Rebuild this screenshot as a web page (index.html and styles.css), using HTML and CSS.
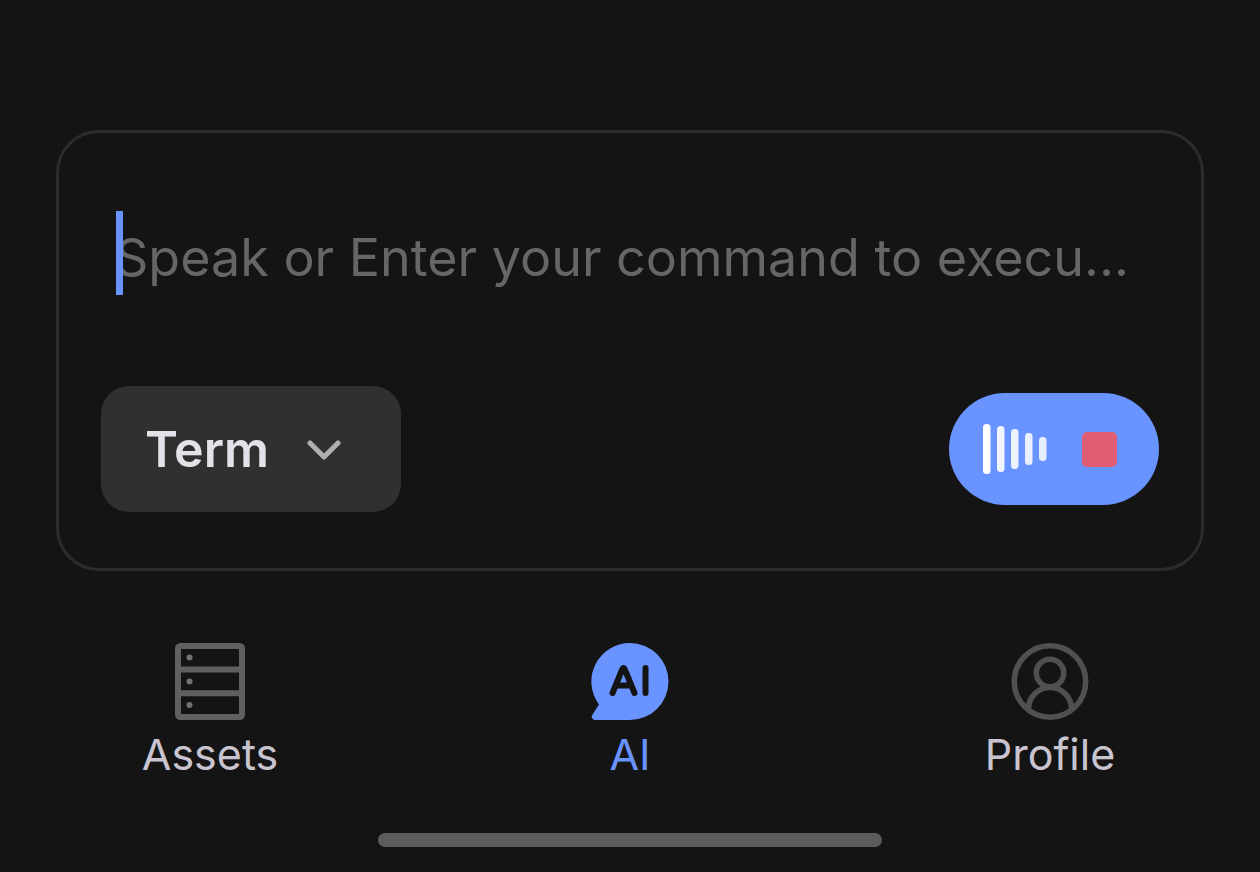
FILE: index.html
```html
<!DOCTYPE html>
<html lang="en">
<head>
<meta charset="utf-8">
<meta name="viewport" content="width=device-width, initial-scale=1">
<title>AI</title>
<link rel="stylesheet" href="styles.css">
</head>
<body>
<main class="screen">
  <form class="composer">
    <div class="prompt">
      <input class="prompt-input" type="text" aria-label="Command" placeholder="Speak or Enter your command to execu...">
      <span class="caret"></span>
    </div>
    <div class="actions">
      <div class="mode">
        <select class="mode-select" aria-label="Mode">
          <option>Term</option>
        </select>
        <svg class="mode-chevron" viewBox="0 0 34 22" aria-hidden="true"><path d="M3 4L17 18L31 4"/></svg>
      </div>
      <button class="voice" type="button" aria-label="Stop recording">
        <svg class="wave" viewBox="0 0 64 50" aria-hidden="true">
          <rect x="0" y="0" width="7.500" height="50" rx="3.500"/>
          <rect x="14" y="2" width="7.500" height="46" rx="3.500" opacity=".9"/>
          <rect x="28" y="5" width="7.500" height="40" rx="3.500" opacity=".88"/>
          <rect x="42" y="9" width="7.500" height="32" rx="3.500" opacity=".86"/>
          <rect x="56" y="13" width="7.500" height="24" rx="3.500" opacity=".84"/>
        </svg>
        <span class="stop"></span>
      </button>
    </div>
  </form>

  <nav class="tabs">
    <a class="tab" href="#assets">
      <svg class="tab-icon" viewBox="0 0 78 78" aria-hidden="true">
        <g fill="none" stroke="#606060" stroke-width="6">
          <rect x="7" y="3" width="64" height="71" rx="2.500"/>
          <path d="M7 26.500H71M7 50.200H71"/>
        </g>
        <g fill="#707070"><circle cx="18.500" cy="14.500" r="3"/><circle cx="18.500" cy="38.500" r="3"/><circle cx="18.500" cy="62" r="3"/></g>
      </svg>
      <span class="tab-label">Assets</span>
    </a>
    <a class="tab tab-active" href="#ai" aria-current="page">
      <svg class="tab-icon" viewBox="0 0 78 78" aria-hidden="true">
        <path fill="#6993ff" d="M39 0A38.500 38.500 0 0 1 39 77H4Q-1 76 1.500 71.500L8 61.500A38.500 38.500 0 0 1 39 0Z"/>
        <path fill="none" stroke="#141414" stroke-width="6" stroke-linecap="round" stroke-linejoin="round" d="M21.500 50L31 27Q32.500 23 34 27L43.500 50M26 42.500H39M54.500 25V50"/>
      </svg>
      <span class="tab-label">AI</span>
    </a>
    <a class="tab" href="#profile">
      <svg class="tab-icon" viewBox="0 0 78 78" aria-hidden="true">
        <g fill="none" stroke="#505052" stroke-width="5.500">
          <circle cx="39" cy="38.500" r="35.700"/>
          <circle cx="39" cy="30" r="13.700"/>
          <path d="M17.500 66A21.500 21.500 0 0 1 60.500 66"/>
        </g>
      </svg>
      <span class="tab-label">Profile</span>
    </a>
  </nav>
  <div class="home-indicator"></div>
</main>
</body>
</html>
```
FILE: styles.css
```css
* {
  box-sizing: border-box;
}

body {
  margin: 0;
  background: #141414;
  color: #c9c5d0;
  font-family: Inter, "Noto Sans", sans-serif;
  font-optical-sizing: none;
}

.screen {
  display: flex;
  flex-direction: column;
  min-height: 100vh;
  padding-top: 130px;
}

.composer {
  display: flex;
  flex-direction: column;
  gap: 87px;
  margin: 0 56px;
  padding: 78px 42px 56px;
  border: 3px solid #2c2c2c;
  border-radius: 43px;
}

.prompt {
  position: relative;
  display: flex;
  padding: 4px 14px 0;
}

.prompt-input {
  flex: 1;
  min-width: 0;
  height: 84px;
  padding: 0;
  border: 0;
  outline: 0;
  background: transparent;
  color: #e4e1e9;
  font: inherit;
  font-size: 52px;
  text-overflow: ellipsis;
}

.prompt-input::placeholder {
  color: #666;
  opacity: 1;
}

.caret {
  position: absolute;
  top: 0;
  left: 15px;
  width: 7px;
  height: 84px;
  background: #6993ff;
}

.actions {
  display: flex;
  align-items: center;
  justify-content: space-between;
}

.mode {
  position: relative;
}

.mode-select {
  width: 300px;
  height: 126px;
  padding: 0 44px;
  appearance: none;
  border: 0;
  border-radius: 28px;
  background: #303030;
  color: #e4e1e9;
  font: inherit;
  font-size: 50px;
  font-weight: 600;
}

.mode-chevron {
  position: absolute;
  top: 53px;
  right: 60px;
  width: 34px;
  height: 22px;
  fill: none;
  stroke: #b0b0b0;
  stroke-width: 5;
  stroke-linecap: round;
  stroke-linejoin: round;
  pointer-events: none;
}

.voice {
  display: flex;
  align-items: center;
  gap: 35px;
  height: 112px;
  padding: 0 42px 0 34px;
  border: 0;
  border-radius: 56px;
  background: #6993ff;
}

.wave {
  width: 64px;
  height: 50px;
  fill: #fff;
}

.stop {
  width: 35px;
  height: 35px;
  border-radius: 5px;
  background: #e05e74;
}

.tabs {
  display: grid;
  grid-template-columns: repeat(3, 1fr);
  padding-top: 72px;
}

.tab {
  display: flex;
  flex-direction: column;
  align-items: center;
  gap: 8px;
  color: inherit;
  text-decoration: none;
}

.tab-active {
  color: #6993ff;
}

.tab-icon {
  width: 78px;
  height: 78px;
}

.tab-label {
  font-size: 43px;
  line-height: 50px;
}

.home-indicator {
  width: 40%;
  height: 14px;
  margin: auto auto 25px;
  border-radius: 7px;
  background: #5c5c5c;
}
```
